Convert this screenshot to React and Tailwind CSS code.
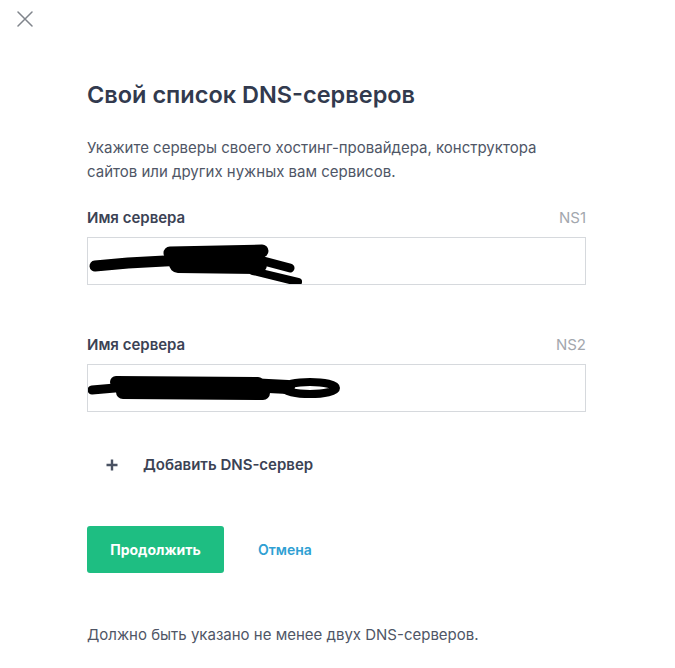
import React from 'react';

const font = { fontFamily: 'Inter, "Noto Sans", sans-serif' };

function Scribble1() {
  return (
    <svg className="absolute left-0 top-0" width="260" height="48" viewBox="0 0 260 48" fill="none">
      <g stroke="#000" strokeLinecap="round" strokeLinejoin="round">
        <path d="M7 28 L40 25 L95 22" strokeWidth="11" />
        <path d="M82 15 L174 13" strokeWidth="13" />
        <path d="M90 26 L170 27" strokeWidth="18" />
        <path d="M168 21 L202 30" strokeWidth="9" />
        <path d="M165 33 L210 44" strokeWidth="8" />
      </g>
    </svg>
  );
}

function Scribble2() {
  return (
    <svg className="absolute left-0 top-0" width="300" height="48" viewBox="0 0 300 48" fill="none">
      <g stroke="#000" strokeLinecap="round" strokeLinejoin="round">
        <path d="M4 25 L50 21" strokeWidth="9" />
        <path d="M28 17 L170 18" strokeWidth="12" />
        <path d="M35 27 L175 28" strokeWidth="14" />
        <ellipse cx="222" cy="23" rx="26" ry="6" strokeWidth="8" />
        <path d="M160 20 L200 22" strokeWidth="14" />
      </g>
    </svg>
  );
}

function ServerField({ label, tag, Scribble }) {
  return (
    <div>
      <div className="flex justify-between items-center h-5">
        <span className="text-[15px] font-semibold text-[#3b4254]">{label}</span>
        <span className="text-[15px] text-[#a3a7ae]">{tag}</span>
      </div>
      <div className="relative mt-[9px] h-[48px] border border-[#d6d9dd] bg-white overflow-hidden">
        <Scribble />
      </div>
    </div>
  );
}

export default function App() {
  return (
    <div className="w-[675px] h-[668px] bg-white" style={font}>
      <div className="pt-[11px] pl-[17px]">
        <button className="block w-4 h-4">
          <svg width="16" height="16" viewBox="0 0 16 16" fill="none">
            <path d="M1 1 L15 15 M15 1 L1 15" stroke="#80858c" strokeWidth="1.5" strokeLinecap="round" />
          </svg>
        </button>
      </div>

      <div className="pl-[87px] w-[586px]">
        <h2 className="mt-[54px] text-[23.5px] leading-[28px] font-semibold text-[#323a4e]">
          Свой список DNS-серверов
        </h2>
        <p className="mt-[27px] text-[15px] leading-[24px] text-[#4f5666]">
          Укажите серверы своего хостинг-провайдера, конструктора<br />
          сайтов или других нужных вам сервисов.
        </p>

        <div className="mt-[24px]">
          <ServerField label="Имя сервера" tag="NS1" Scribble={Scribble1} />
        </div>
        <div className="mt-[50px]">
          <ServerField label="Имя сервера" tag="NS2" Scribble={Scribble2} />
        </div>

        <button className="mt-[43px] flex items-center h-5 pl-[19px]">
          <svg width="12" height="12" viewBox="0 0 12 12" fill="none">
            <path d="M6 0.5 V11.5 M0.5 6 H11.5" stroke="#4a5263" strokeWidth="2.4" />
          </svg>
          <span className="ml-[25px] text-[15px] font-semibold text-[#3b4254]">Добавить DNS-сервер</span>
        </button>

        <div className="mt-[51px] flex items-center">
          <button className="w-[137px] h-[47px] rounded-[3px] bg-[#1ebe82] text-white text-[14px] font-bold">
            Продолжить
          </button>
          <button className="ml-[34px] text-[14px] font-semibold text-[#2f9fd3]">Отмена</button>
        </div>

        <p className="mt-[52px] text-[15px] leading-[20px] text-[#4f5666]">
          Должно быть указано не менее двух DNS-серверов.
        </p>
      </div>
    </div>
  );
}
